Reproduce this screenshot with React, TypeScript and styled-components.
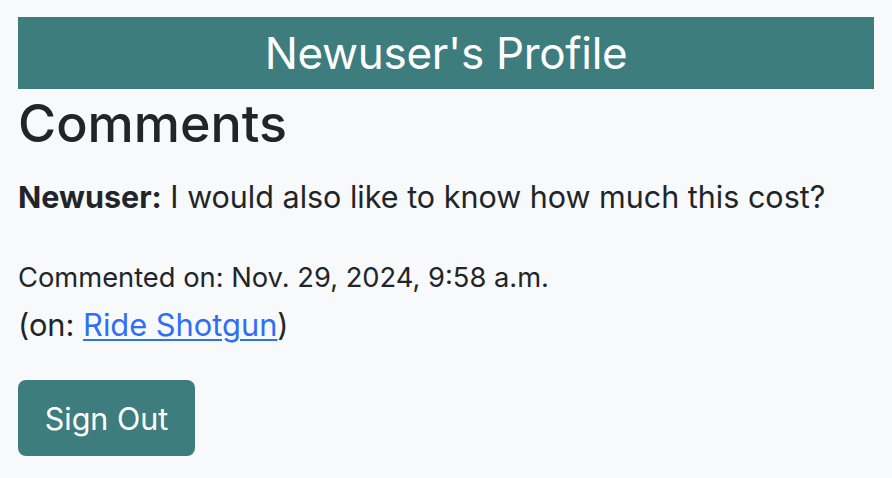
import React from "react";
import styled, { createGlobalStyle } from "styled-components";

const Global = createGlobalStyle`
  html, body { margin: 0; padding: 0; background: #f8f9fa; }
  body {
    font-family: Inter, "Noto Sans", "Liberation Sans", sans-serif;
    color: #212529;
  }
`;

const Page = styled.div`
  padding: 17px 18px 0 18px;
  display: flex;
  flex-direction: column;
  align-items: flex-start;
`;

const Banner = styled.h1`
  align-self: stretch;
  margin: 0;
  height: 72px;
  background: #3d7d7d;
  color: #ffffff;
  font-size: 44px;
  font-weight: 400;
  line-height: 72px;
  text-align: center;
  letter-spacing: -0.3px;
`;

const Title = styled.h2`
  margin: 4px 0 0 0;
  font-size: 52px;
  font-weight: 500;
  line-height: 62px;
`;

const CommentText = styled.p`
  margin: 19px 0 0 0;
  font-size: 30.5px;
  line-height: 46px;
`;

const Meta = styled.p`
  margin: 38px 0 0 0;
  font-size: 27.3px;
  line-height: 40px;
`;

const Source = styled.p`
  margin: 4px 0 0 0;
  font-size: 30.8px;
  line-height: 46px;
`;

const Link = styled.a`
  color: #2f6ff5;
  text-decoration: underline;
  text-decoration-thickness: 2px;
  text-underline-offset: 3px;
`;

const Button = styled.button`
  margin-top: 32px;
  width: 177px;
  height: 76px;
  border: none;
  border-radius: 8px;
  background: #3d7d7d;
  color: #ffffff;
  font-family: inherit;
  font-size: 30.5px;
  padding: 0;
`;

export default function App() {
  return (
    <>
      <Global />
      <Page>
        <Banner>Newuser's Profile</Banner>
        <Title>Comments</Title>
        <CommentText>
          <strong>Newuser:</strong> I would also like to know how much this cost?
        </CommentText>
        <Meta>Commented on: Nov. 29, 2024, 9:58 a.m.</Meta>
        <Source>
          (on: <Link href="#">Ride Shotgun</Link>)
        </Source>
        <Button>Sign Out</Button>
      </Page>
    </>
  );
}
